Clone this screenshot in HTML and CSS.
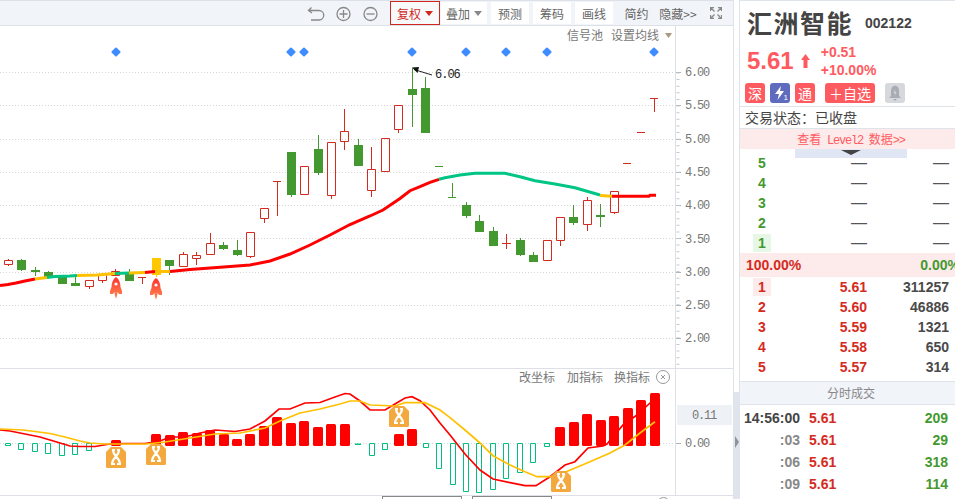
FILE: index.html
```html
<!DOCTYPE html>
<html lang="zh">
<head>
<meta charset="utf-8">
<title>汇洲智能 002122</title>
<link rel="stylesheet" href="styles.css">
</head>
<body>
<div class="page">
  <section class="left">
    <header class="toolbar">
      <div class="tool-icons">
        <svg class="ic" viewBox="0 0 27 24"><path class="ic-line" d="M8.500 6.500 5.500 9.500 9 12M6 9.500H16a4.500 4.500 0 0 1 0 9.500H8"/></svg>
        <svg class="ic" viewBox="0 0 27 24"><circle class="ic-line" cx="13.500" cy="13" r="6.500"/><path class="ic-line" d="M9.500 13h8M13.500 9v8"/></svg>
        <svg class="ic" viewBox="0 0 27 24"><circle class="ic-line" cx="13.500" cy="13" r="6.500"/><path class="ic-line" d="M9.500 13h8"/></svg>
      </div>
      <button class="tb active">复权<i class="caret red"></i></button>
      <button class="tb plain-w w47">叠加<i class="caret"></i></button>
      <button class="tb plain-w w38">预测</button>
      <button class="tb plain-w w38">筹码</button>
      <button class="tb plain-w w38">画线</button>
      <button class="tb w41">简约</button>
      <button class="tb w40">隐藏&gt;&gt;</button>
      <svg class="expand" viewBox="0 0 12 12"><path class="ic-line" d="M.5 4V.5H4M.5.5 4.500 4.500M8 .5h3.500V4M11.500.5 7.500 4.500M.5 8v3.500H4M.5 11.500 4.500 7.500M11.500 8v3.500H8M11.500 11.500 7.500 7.500"/></svg>
    </header>

    <svg class="chart-main" viewBox="0 26 733 342">
      <path class="grid" d="M0 72.500H675M0 105.500H675M0 139.500H675M0 172.500H675M0 205.500H675M0 238.500H675M0 272.500H675M0 305.500H675M0 338.500H675"/>
      <path class="axis" d="M675.500 26V368"/>
      <path class="tick-major" d="M676 72.500h5M676 105.500h5M676 139.500h5M676 172.500h5M676 205.500h5M676 238.500h5M676 272.500h5M676 305.500h5M676 338.500h5"/>
      <line class="tick-minor" x1="678" y1="72.500" x2="678" y2="366"/>
      <g class="axis-label">
        <text x="685" y="76">6.00</text><text x="685" y="109">5.50</text><text x="685" y="143">5.00</text>
        <text x="685" y="176">4.50</text><text x="685" y="209">4.00</text><text x="685" y="243">3.50</text>
        <text x="685" y="276">3.00</text><text x="685" y="309">2.50</text><text x="685" y="342">2.00</text>
      </g>
      <text class="chart-tool" x="567" y="40">信号池</text>
      <text class="chart-tool" x="611" y="40">设置均线</text>
      <path class="mini-caret" d="M665 33h7l-3.500 5z"/>
      <g class="diamonds">
        <rect x="112.500" y="48.500" width="7" height="7" rx="1" transform="rotate(45 116 52)"/>
        <rect x="287.500" y="48.500" width="7" height="7" rx="1" transform="rotate(45 291 52)"/>
        <rect x="300.500" y="48.500" width="7" height="7" rx="1" transform="rotate(45 304 52)"/>
        <rect x="408.500" y="48.500" width="7" height="7" rx="1" transform="rotate(45 412 52)"/>
        <rect x="462.500" y="48.500" width="7" height="7" rx="1" transform="rotate(45 466 52)"/>
        <rect x="502.500" y="48.500" width="7" height="7" rx="1" transform="rotate(45 506 52)"/>
        <rect x="543.500" y="48.500" width="7" height="7" rx="1" transform="rotate(45 547 52)"/>
        <rect x="650.500" y="48.500" width="7" height="7" rx="1" transform="rotate(45 654 52)"/>
      </g>
      <path class="c-red" d="M4.500 260.500h8v4h-8zM8.500 259v1.500M8.500 264.500V266
        M85.500 280.500h8v6h-8zM89.500 286.500V289
        M98.500 274.500h8v6h-8zM102.500 280.500V283
        M111.500 271.500h8v4h-8zM115.500 269v2.500
        M179.500 254.500h8v12h-8zM183.500 252v2.500
        M192.500 255.500h8v3h-8zM196.500 252v3.500M196.500 258.500V265
        M206.500 243.500h8v11h-8zM210.500 233v10.500
        M246.500 232.500h8v24h-8zM250.500 256.500V258
        M260.500 208.500h8v10h-8zM264.500 218.500V223
        M300.500 166.500h8v28h-8z
        M327.500 142.500h8v53h-8zM331.500 195.500V199
        M340.500 131.500h8v10h-8zM344.500 109v22.500M344.500 141.500V150
        M367.500 169.500h8v21h-8zM371.500 147v22.500M371.500 190.500V197
        M381.500 138.500h8v33h-8z
        M394.500 105.500h8v24h-8zM398.500 129.500V133
        M543.500 240.500h8v20h-8z
        M556.500 217.500h8v23h-8zM560.500 240.500V246
        M583.500 200.500h8v24h-8zM587.500 197v3.500M587.500 224.500V231
        M610.500 191.500h8v21h-8zM614.500 212.500V214
        M138 277.500h8M142.500 278V284M273 181.500h8M277.500 181V216
        M502 243.500h9M506.500 234V249M623 163.500h8M637 132.500h8M650 98.500h8M654.500 99V112"/>
      <path class="w-green" d="M21.500 259V271M35.500 267V276M48.500 271V274M75.500 275V286M129.500 269V275M169.500 262V275M223.500 242V250M237.500 240V256M291.500 190V197M318.500 135V175M358.500 139V150M412.500 68V127M425.500 77V90M466.500 202V218M479.500 215V225M493.500 227V235M520.500 238V256M533.500 252V258M573.500 205V225M600.500 204V227M452.500 183V197M448 197.500h8M435 166.500h8"/>
      <path class="b-green" d="M17 260h9v10h-9zM31 270h9v2h-9zM44 272h9v5h-9zM58 277h9v7h-9zM71 283h9v3h-9zM125 273h9v8h-9zM165 260h9v6h-9zM219 245h9v4h-9zM233 250h9v5h-9zM287 152h9v43h-9zM314 149h9v24h-9zM354 145h9v21h-9zM408 89h9v6h-9zM421 88h9v45h-9zM462 205h9v11h-9zM475 221h9v11h-9zM489 231h9v15h-9zM516 240h9v15h-9zM529 255h9v7h-9zM569 217h9v6h-9zM596 215h9v2h-9z"/>
      <path class="b-yellow" d="M152 258h9v17h-9zM156 275h1v2h-1z"/>
      <polyline class="ma ma-red" points="0,285.500 8,284.500 16,283 25,281 35,279"/>
      <polyline class="ma ma-yellow" points="35,279 47,277.500"/>
      <polyline class="ma ma-green" points="47,277.500 55,276.500 70,276 77,275.500"/>
      <polyline class="ma ma-yellow" points="77,275.500 97,275 115,273.500"/>
      <polyline class="ma ma-green" points="115,273.500 129,273"/>
      <polyline class="ma ma-yellow" points="129,273 145,272.500"/>
      <polyline class="ma ma-red" points="145,272.500 155,271.500"/>
      <polyline class="ma ma-yellow" points="155,271.500 170,271.500"/>
      <polyline class="ma ma-red" points="170,271.500 190,269.500 217,267.500 250,265 270,261 290,254 310,245 330,235 350,224.500 370,216 383,210 400,198.500 410,190.700 420,186.700 430,182.300 439,179.300"/>
      <polyline class="ma ma-green" points="439,179.300 445,177.700 460,175 475,173.300 505,173.300 520,176.700 535,180.700 555,184 575,187.700 600,195"/>
      <polyline class="ma ma-yellow" points="600,195.500 612,196.300"/>
      <polyline class="ma ma-red" points="612,196.300 649,196.300 650,195.300 656,195.300"/>
      <path class="note-line" d="M414 69.500 432 75"/>
      <path class="note-head" d="M412 67.500 419 67 417.500 73z"/>
      <text class="note-text" x="435" y="78">6.06</text>
      <defs>
        <linearGradient id="flame" x1="0" y1="0" x2="0" y2="1">
          <stop offset="0" stop-color="#ff3030"/><stop offset="1" stop-color="#ff8a50"/>
        </linearGradient>
        <g id="rocket">
          <path class="rocket-body" d="M0 0C3 2 4.500 6 4.500 10L6 14V17H3L1.500 15 1 19 0 21.500-1 19-1.500 15-3 17H-6V14L-4.500 10C-4.500 6-3 2 0 0Z"/>
          <circle class="rocket-win" cy="7" r="1.600"/>
        </g>
      </defs>
      <use href="#rocket" x="116" y="277"/>
      <use href="#rocket" x="156" y="278"/>
    </svg>

    <svg class="chart-sub" viewBox="0 368 733 128">
      <path class="axis" d="M0 368.500H733M0 495.500H733M675.500 368V496"/>
      <path class="grid" d="M0 443.500H675"/>
      <path class="tick-major" d="M676 443.500h5"/>
      <text class="chart-tool" x="519" y="382">改坐标</text>
      <text class="chart-tool" x="567" y="382">加指标</text>
      <text class="chart-tool" x="614" y="382">换指标</text>
      <circle class="close" cx="663" cy="377" r="6.500"/>
      <path class="close" d="M661 375l4 4M665 375l-4 4"/>
      <rect class="val-bg" x="677" y="405" width="55" height="20"/>
      <text class="axis-label-s" x="692" y="419">0.11</text>
      <text class="axis-label-s" x="685" y="447">0.00</text>
      <path class="m-green" d="M5.500 443.500h5v2h-5zM18.500 443.500h5v6h-5zM32.500 443.500h5v8h-5zM45.500 443.500h5v10h-5zM59.500 443.500h5v12h-5zM72.500 443.500h5v11h-5zM86.500 443.500h5v7h-5zM369.500 443.500h5v12h-5zM382.500 443.500h5v6h-5zM423.500 443.500h5v4h-5zM436.500 443.500h5v25h-5zM450.500 443.500h5v41h-5zM463.500 443.500h5v48h-5zM476.500 443.500h5v49h-5zM490.500 443.500h5v46h-5zM503.500 443.500h5v35h-5zM517.500 443.500h5v29h-5zM530.500 443.500h5v19h-5zM544.500 443.500h5v3h-5z"/>
      <path class="m-green-fill" d="M355 443.500h6v1.500h-6z"/>
      <g class="m-red">
        <rect x="111" y="440" width="10" height="6" rx="1.500"/>
        <rect x="151" y="434" width="10" height="12" rx="1.500"/>
        <rect x="165" y="435" width="10" height="11" rx="1.500"/>
        <rect x="178" y="432" width="10" height="14" rx="1.500"/>
        <rect x="192" y="433" width="10" height="13" rx="1.500"/>
        <rect x="205" y="430" width="10" height="16" rx="1.500"/>
        <rect x="219" y="434" width="10" height="12" rx="1.500"/>
        <rect x="232" y="439" width="10" height="7" rx="1.500"/>
        <rect x="245" y="434" width="10" height="12" rx="1.500"/>
        <rect x="259" y="426" width="10" height="20" rx="1.500"/>
        <rect x="272" y="417" width="10" height="29" rx="1.500"/>
        <rect x="286" y="423" width="10" height="23" rx="1.500"/>
        <rect x="299" y="421" width="10" height="25" rx="1.500"/>
        <rect x="313" y="427" width="10" height="19" rx="1.500"/>
        <rect x="326" y="424" width="10" height="22" rx="1.500"/>
        <rect x="340" y="424" width="10" height="22" rx="1.500"/>
        <rect x="394" y="434" width="10" height="12" rx="1.500"/>
        <rect x="407" y="429" width="10" height="17" rx="1.500"/>
        <rect x="555" y="427" width="10" height="19" rx="1.500"/>
        <rect x="569" y="422" width="10" height="24" rx="1.500"/>
        <rect x="582" y="414" width="10" height="32" rx="1.500"/>
        <rect x="596" y="420" width="10" height="26" rx="1.500"/>
        <rect x="609" y="416" width="10" height="30" rx="1.500"/>
        <rect x="623" y="408" width="10" height="38" rx="1.500"/>
        <rect x="636" y="400" width="10" height="46" rx="1.500"/>
        <rect x="650" y="393" width="10" height="53" rx="1.500"/>
      </g>
      <polyline class="macd macd-red" points="0,430 10,431 20,433 30,435 40,437 50,440 60,443 70,446 80,446.500 95,446.500 110,444 125,443.500 145,443.500 160,441 170,437 185,437 200,433 215,430 235,431.500 250,429 265,421 279,409 290,409 305,403 320,402.500 335,397 345,393.500 350,394 360,401 370,410 385,410 395,404 405,398 412,396.700 420,400.700 430,410 440,423 450,435 465,454 480,470 493,479 510,482.700 525,485.700 536,485.700 550,476.700 565,465 575,461.700 588,448 603,446 607,444 623,425 637,415 650,403 658,395"/>
      <polyline class="macd macd-yellow" points="0,429 23,430 35,431.500 50,433.500 65,437 80,441 90,443 105,444 146,444 165,442 190,438 215,434 240,433 265,428 280,421 300,413 320,409 340,404 350,401 360,401 370,405 395,406 405,402.700 425,402.700 440,410 450,417.700 465,430 480,443 493,455.700 510,465 525,471.700 537,476.700 550,476.700 565,472.300 590,461.700 610,453 625,445 640,433 655,421.700"/>
      <defs>
        <g id="xtag">
          <path class="tag-bg" d="M5 0H15L20 5V19.500Q20 21 18.500 21H1.500Q0 21 0 19.500V5Z"/>
          <path class="tag-x" d="M7 3C7 9 14 11 14 17M13 3C13 9 6 11 6 17M5 17H9M11 17H15M6 3H9M11 3H14"/>
        </g>
      </defs>
      <use href="#xtag" x="106" y="447"/>
      <use href="#xtag" x="146" y="444"/>
      <use href="#xtag" x="389" y="406"/>
      <use href="#xtag" x="551" y="471"/>
    </svg>

    <div class="tabs">
      <span class="tab"></span>
      <span class="tab"></span>
      <span class="tab-close"></span>
    </div>
  </section>

  <div class="gutter">
    <div class="gutter-gap"></div>
    <div class="gutter-strip"><i class="gutter-arrow"></i></div>
  </div>

  <aside class="right">
    <div class="title-row">
      <h1 class="name">汇洲智能</h1>
      <span class="code">002122</span>
    </div>
    <div class="price-row">
      <span class="price">5.61</span>
      <svg class="price-arrow" viewBox="0 0 9 14"><path d="M4.500 0 9 6H6.500V14H2.500V6H0Z"/></svg>
      <div class="change">
        <span>+0.51</span>
        <span>+10.00%</span>
      </div>
    </div>
    <div class="badge-row">
      <span class="badge">深</span>
      <span class="badge badge-blue">
        <svg viewBox="0 0 20 20"><path class="bolt" d="M11 3 5 11H9L7.500 17 14 8H10Z"/></svg>
        <em class="badge-sub">1</em>
      </span>
      <span class="badge">通</span>
      <span class="badge badge-wide">＋自选</span>
      <span class="badge badge-grey">
        <svg viewBox="0 0 20 20"><path class="bell" d="M10 2.500C7 3 6 5.500 6 8V13L4 15H16L14 13V8C14 5.500 13 3 10 2.500ZM8 16H12L10 18Z"/><path class="bell-bolt" d="M10.500 6 8.500 10H10L9.500 13 11.500 9H10Z"/></svg>
      </span>
    </div>
    <div class="status">交易状态：已收盘</div>
    <div class="level2">查看 <span class="mono">Level2</span> 数据<span class="mono">&gt;&gt;</span></div>
    <div class="book">
      <i class="book-tab"></i>
      <div class="row sell"><span class="lv">5</span><span class="p dash">—</span><span class="v dash">—</span></div>
      <div class="row sell"><span class="lv">4</span><span class="p dash">—</span><span class="v dash">—</span></div>
      <div class="row sell"><span class="lv">3</span><span class="p dash">—</span><span class="v dash">—</span></div>
      <div class="row sell"><span class="lv">2</span><span class="p dash">—</span><span class="v dash">—</span></div>
      <div class="row sell"><span class="lv lv-hl">1</span><span class="p dash">—</span><span class="v dash">—</span></div>
    </div>
    <div class="ratio"><span class="ratio-up">100.00%</span><span class="ratio-down">0.00%</span></div>
    <div class="book-buy">
      <div class="row buy"><span class="lv lv-hl">1</span><span class="p">5.61</span><span class="v">311257</span></div>
      <div class="row buy"><span class="lv">2</span><span class="p">5.60</span><span class="v">46886</span></div>
      <div class="row buy"><span class="lv">3</span><span class="p">5.59</span><span class="v">1321</span></div>
      <div class="row buy"><span class="lv">4</span><span class="p">5.58</span><span class="v">650</span></div>
      <div class="row buy"><span class="lv">5</span><span class="p">5.57</span><span class="v">314</span></div>
    </div>
    <div class="section-title">分时成交</div>
    <div class="ticks">
      <div class="tick-row"><span class="t t-full">14:56:00</span><span class="tp">5.61</span><span class="tv">209</span></div>
      <div class="tick-row"><span class="t">:03</span><span class="tp">5.61</span><span class="tv">29</span></div>
      <div class="tick-row"><span class="t">:06</span><span class="tp">5.61</span><span class="tv">318</span></div>
      <div class="tick-row"><span class="t">:09</span><span class="tp">5.61</span><span class="tv">114</span></div>
    </div>
  </aside>
</div>
</body>
</html>
```

FILE: styles.css
```css
* { box-sizing: border-box; }
html, body { margin: 0; padding: 0; background: #fff; }
body { font-family: "Liberation Sans", "Noto Sans CJK SC", sans-serif; color: #444; }
.page { display: flex; width: 955px; height: 499px; overflow: hidden; }

/* left column */
.left { width: 734px; flex: none; border-right: 1px solid #dfe3ea; display: flex; flex-direction: column; }
.toolbar { height: 26px; flex: none; display: flex; align-items: stretch; justify-content: flex-end; padding-right: 4px; background: #f1f4f8; border-top: 1px solid #dde1e7; border-bottom: 1px solid #dde1e7; }
.tool-icons { display: flex; margin-right: 6px; }
.ic { width: 27px; height: 24px; }
.ic-line { fill: none; stroke: #888; stroke-width: 1.3; }
.tb { border: 0; background: none; padding: 0; margin: 0; font: 12px "Noto Sans CJK SC", sans-serif; color: #666; display: flex; align-items: center; justify-content: center; gap: 4px; white-space: nowrap; }
.active { width: 50px; color: #d0281f; border: 1px solid #d0281f; background: #f8f9fb; }
.plain-w { background: #fff; margin: 1px 4px 1px 0; }
.w47 { width: 46px; margin-left: 1px; }
.w38 { width: 38px; }
.w41 { width: 41px; margin-left: -1px; margin-right: 1px; }
.w40 { width: 40px; margin-right: 12px; font-size: 12px; }
.caret { width: 0; height: 0; border-left: 4px solid transparent; border-right: 4px solid transparent; border-top: 5px solid #888; }
.caret.red { border-top-color: #d0281f; }
.expand { width: 12px; height: 12px; align-self: center; margin-right: 7px; }

.chart-main { display: block; width: 733px; height: 342px; flex: none; }
.chart-sub { display: block; width: 733px; height: 128px; flex: none; }
.grid { fill: none; stroke: #d6d6d6; stroke-width: 1; stroke-dasharray: 1 2; }
.axis { fill: none; stroke: #dde1e7; stroke-width: 1; }
.tick-major { fill: none; stroke: #aeb4bc; stroke-width: 1; }
.tick-minor { stroke: #c4c8ce; stroke-width: 3; stroke-dasharray: 1 5.620; }
.axis-label text, .axis-label-s { font: 12px "Liberation Mono", monospace; letter-spacing: -1.2px; fill: #777; }
.chart-tool { font: 12px "Noto Sans CJK SC", sans-serif; fill: #777; }
.mini-caret { fill: #a89a80; }
.diamonds rect { fill: #3f8cff; }
.c-red { fill: none; stroke: #d52b1e; stroke-width: 1; }
.w-green { fill: none; stroke: #43992f; stroke-width: 1; }
.b-green { fill: #43992f; }
.b-yellow { fill: #ffc800; }
.ma { fill: none; stroke-width: 3; }
.ma-red { stroke: #f00; }
.ma-yellow { stroke: #ffc000; }
.ma-green { stroke: #00c585; }
.note-line { fill: none; stroke: #222; stroke-width: 1; }
.note-head { fill: #111; }
.note-text { font: 12px "Liberation Mono", monospace; letter-spacing: -1px; fill: #222; }
.rocket-body { fill: url(#flame); }
.rocket-win { fill: #fff; }
.close { fill: none; stroke: #999; stroke-width: 1; }
.val-bg { fill: #eef1f6; }
.m-green { fill: #fff; stroke: #00c080; stroke-width: 1; }
.m-green-fill { fill: #00c080; }
.m-red rect { fill: #f00; }
.macd { fill: none; stroke-width: 1.7; }
.macd-red { stroke: #f00; }
.macd-yellow { stroke: #ffc000; }
.tag-bg { fill: #f4a93f; }
.tag-x { fill: none; stroke: #fff; stroke-width: 2.200; }

.tabs { flex: 1; display: flex; padding-left: 382px; gap: 10px; overflow: hidden; }
.tab { width: 80px; height: 6px; flex: none; border: 1px solid #888; }
.tab-close { width: 13px; height: 13px; flex: none; margin-left: 95px; margin-top: 1px; border: 1px solid #999; border-radius: 50%; }

/* gutter */
.gutter { width: 6px; flex: none; display: flex; flex-direction: column; border-right: 1px solid #dfe3ea; }
.gutter-gap { height: 392px; flex: none; }
.gutter-strip { flex: 1; background: #e0e4ec; display: flex; align-items: center; padding-left: 1px; padding-bottom: 7px; }
.gutter-arrow { width: 0; height: 0; border-left: 4px solid #8f939b; border-top: 6px solid transparent; border-bottom: 6px solid transparent; }

/* right column */
.right { flex: 1; min-width: 0; border-top: 1px solid #dfe3ea; }
.title-row { height: 43px; display: flex; align-items: center; padding-left: 7px; }
.name { margin: 0; font: 700 25px/1 "Noto Sans CJK SC", sans-serif; letter-spacing: 1.500px; color: #444; }
.code { margin-left: 12px; font-size: 14px; font-weight: 700; color: #444; }
.price-row { height: 34px; display: flex; align-items: center; padding-left: 7px; }
.price { font-size: 24px; font-weight: 700; color: #ff5a5f; }
.price-arrow { width: 9px; height: 14px; margin-left: 7px; margin-top: -1px; fill: #ff5a5f; }
.change { display: flex; flex-direction: column; margin-left: 11px; font-size: 14px; line-height: 18px; font-weight: 700; color: #ff5a5f; }
.badge-row { margin-top: 5px; height: 20px; display: flex; padding-left: 5px; gap: 5px; }
.badge { width: 20px; height: 20px; border-radius: 3px; background: #ff5a5f; color: #fff; font: 14px/20px "Noto Sans CJK SC", sans-serif; text-align: center; position: relative; }
.badge svg { display: block; width: 20px; height: 20px; }
.badge-blue { background: #5f6bbd; }
.bolt { fill: #fff; }
.badge-sub { position: absolute; right: 2px; bottom: 1px; font: 8px/8px "Liberation Sans", sans-serif; color: #fff; }
.badge-wide { width: 50px; margin-left: 5px; }
.badge-grey { background: #d6d8dd; margin-left: 5px; }
.bell { fill: #a9acb2; }
.bell-bolt { fill: #d6d8dd; }
.status { margin-top: 3px; height: 23px; border-top: 1px solid #dfe3ea; border-bottom: 1px solid #dfe3ea; padding-left: 5px; font: 14px/21px "Noto Sans CJK SC", sans-serif; color: #444; }
.level2 { height: 20px; background: #fdeaea; color: #ff5a5f; font: 12px/20px "Noto Sans CJK SC", sans-serif; word-spacing: 3px; text-align: center; padding-left: 7px; }
.mono { font-family: "Liberation Mono", monospace; letter-spacing: -1.200px; }
.book { position: relative; padding-top: 4px; }
.book-tab { position: absolute; left: 55px; top: 0; width: 112px; height: 9px; background: #e0e6f3; }
.book-tab::after { content: ""; position: absolute; left: 46px; top: 1px; border-left: 10px solid transparent; border-right: 10px solid transparent; border-top: 5px solid #444; }
.row { display: grid; grid-template-columns: 18px 96px 82px; height: 20px; padding-left: 13px; font-size: 14px; font-weight: 700; line-height: 20px; }
.lv { text-align: center; height: 18px; margin-top: 1px; line-height: 18px; }
.sell .lv { color: #43992f; }
.buy .lv, .buy .p { color: #d52b1e; }
.sell .lv-hl { background: #e6f7e6; }
.buy .lv-hl { background: #fdeaea; }
.p, .v { text-align: right; }
.v { color: #4a4a4a; }
.dash { font-size: 16px; font-weight: 400; color: #555; }
.ratio { height: 24px; background: #fdeaea; display: flex; justify-content: space-between; align-items: center; padding-left: 6px; margin-right: -5px; font-size: 14px; font-weight: 700; }
.ratio-up { color: #d52b1e; }
.ratio-down { color: #43992f; }
.book-buy { height: 104px; }
.section-title { height: 24px; background: #f1f4f8; border-top: 1px solid #dfe3ea; border-bottom: 1px solid #dfe3ea; color: #888; font: 12px/22px "Noto Sans CJK SC", sans-serif; text-align: center; padding-left: 7px; }
.ticks { padding-top: 2px; }
.tick-row { display: grid; grid-template-columns: 60px 1fr auto; height: 22px; line-height: 22px; font-size: 14px; font-weight: 700; padding-right: 7px; }
.t { text-align: right; color: #888; }
.t-full { color: #444; }
.tp { color: #d52b1e; padding-left: 9px; }
.tv { color: #43992f; }
```
